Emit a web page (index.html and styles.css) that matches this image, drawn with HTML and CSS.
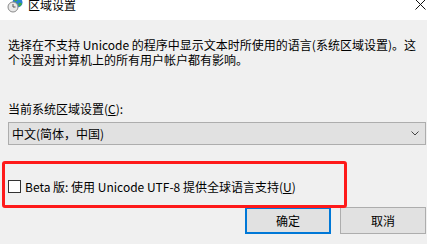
FILE: index.html
```html
<!DOCTYPE html>
<html lang="zh-CN">
<head>
<meta charset="utf-8">
<title>区域设置</title>
<link rel="stylesheet" href="styles.css">
</head>
<body>
<div class="titlebar">
  <svg class="app-icon" width="16" height="16" viewBox="0 0 16 16">
    <circle cx="10.5" cy="5.5" r="5" fill="#2a7fd4"/>
    <path d="M7 2.5 Q9 1 11 2.5 Q10 4.5 8 4.5 Z M11.5 6 Q14 5 15 7 Q13 10 11.5 9 Z" fill="#3fae3a"/>
    <circle cx="6" cy="10" r="5" fill="#e8e8e8" stroke="#8a8a8a" stroke-width="1"/>
    <path d="M6 7 V10 H8.5" fill="none" stroke="#555" stroke-width="1"/>
  </svg>
  <span class="title">区域设置</span>
  <svg class="close" width="11" height="11" viewBox="0 0 11 11">
    <path d="M0.5 0.5 L10.5 10.5 M10.5 0.5 L0.5 10.5" stroke="#111" stroke-width="1"/>
  </svg>
</div>
<div class="content">
  <p class="desc">选择在不支持 Unicode 的程序中显示文本时所使用的语言(系统区域设置)。这个设置对计算机上的所有用户帐户都有影响。</p>
  <div class="field-label">当前系统区域设置(<u>C</u>):</div>
  <div class="combo">
    <span>中文(简体，中国)</span>
    <svg class="chevron" width="8" height="5" viewBox="0 0 8 5">
      <path d="M0.5 0.5 L4 4 L7.5 0.5" fill="none" stroke="#444" stroke-width="1"/>
    </svg>
  </div>
  <div class="check-row">
    <span class="checkbox"></span>
    <span>Beta 版: 使用 Unicode UTF-8 提供全球语言支持(<u>U</u>)</span>
  </div>
  <div class="buttons">
    <div class="btn primary">确定</div>
    <div class="btn">取消</div>
  </div>
</div>
<div class="highlight"></div>
</body>
</html>
```
FILE: styles.css
```css
html, body {
  margin: 0;
  padding: 0;
}
body {
  width: 427px;
  height: 244px;
  overflow: hidden;
  background: #f0f0f0;
  font-family: "Noto Sans CJK SC", sans-serif;
  font-size: 12px;
  color: #000;
  position: relative;
}
.titlebar {
  height: 30px;
  margin-top: -10px;
  background: #fff;
  display: flex;
  align-items: center;
  padding: 0 1px 0 7px;
}
.app-icon {
  flex: none;
}
.title {
  margin-left: 5px;
  line-height: 14px;
  flex: 1;
}
.close {
  flex: none;
  margin-right: 0;
  margin-top: -1px;
}
.content {
  padding: 0 1px 0 8px;
}
.desc {
  margin: 17px 0 0;
  line-height: 15px;
}
.field-label {
  margin-top: 34px;
  line-height: 15px;
}
.combo {
  margin-top: 6px;
  height: 23px;
  box-sizing: border-box;
  border: 1px solid #adadad;
  background: #e1e1e1;
  display: flex;
  align-items: center;
  justify-content: space-between;
  padding: 0 6px 0 3px;
}
.check-row {
  margin-top: 34px;
  display: flex;
  align-items: center;
  line-height: 15px;
}
.checkbox {
  width: 13px;
  height: 13px;
  box-sizing: border-box;
  border: 1px solid #333;
  background: #fff;
  margin-right: 4px;
  flex: none;
}
.buttons {
  margin-top: 13px;
  display: flex;
  justify-content: flex-end;
  gap: 9px;
}
.btn {
  width: 86px;
  height: 27px;
  box-sizing: border-box;
  border: 1px solid #adadad;
  background: #e1e1e1;
  display: flex;
  align-items: center;
  justify-content: center;
}
.btn.primary {
  border: 2px solid #0078d7;
}
.highlight {
  position: absolute;
  left: 2px;
  top: 161px;
  width: 345px;
  height: 47px;
  box-sizing: border-box;
  border: 3px solid #fe1a1a;
  border-radius: 3px;
}
```
